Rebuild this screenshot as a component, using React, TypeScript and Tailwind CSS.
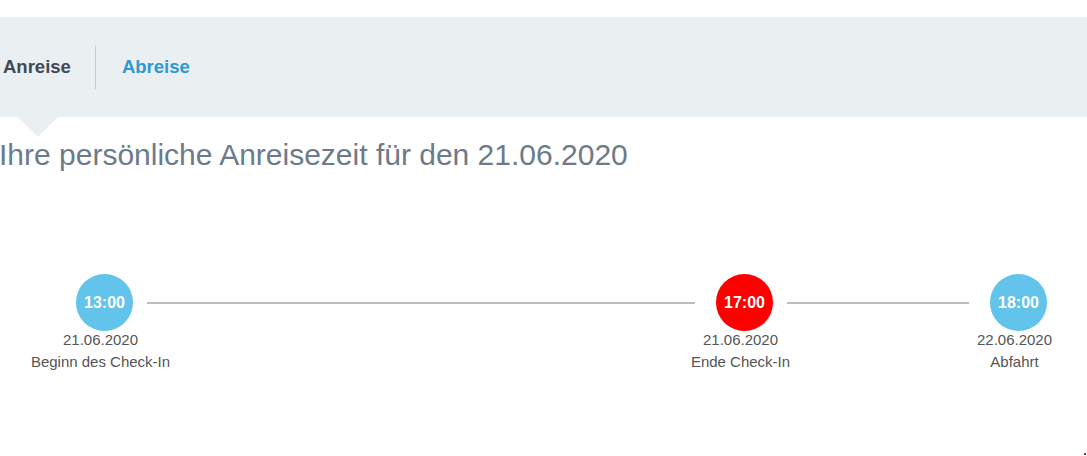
const NODES = [
  { time: "13:00", date: "21.06.2020", label: "Beginn des Check-In", color: "bg-[#62c3eb]" },
  { time: "17:00", date: "21.06.2020", label: "Ende Check-In", color: "bg-[#ff0000]" },
  { time: "18:00", date: "22.06.2020", label: "Abfahrt", color: "bg-[#62c3eb]" },
];

const TimeNode = ({ time, date, label, color }: (typeof NODES)[number]) => {
  return (
    <div className="flex flex-col items-center w-[57px] shrink-0">
      <div
        className={`w-[57px] h-[57px] rounded-full ${color} flex items-center justify-center text-white font-bold text-[16px]`}
      >
        {time}
      </div>
      <p className="whitespace-nowrap pr-[8px] text-[15px] leading-[22px] text-[#555] -mt-[2px]">{date}</p>
      <p className="whitespace-nowrap pr-[8px] text-[15px] leading-[22px] text-[#555]">{label}</p>
    </div>
  );
};

export default function App() {
  return (
    <div className="w-[1087px] h-[456px] bg-white overflow-hidden relative font-['Liberation_Sans',Arial,sans-serif]">
      <div className="h-[17px]" />
      <nav className="relative h-[100px] bg-[#eaeff2] flex items-center">
        <span className="pl-[3px] pr-[24px] text-[18.5px] font-bold text-[#404a55]">Anreise</span>
        <span className="w-px h-[43px] bg-[#c6ccd1]" />
        <span className="pl-[26px] text-[18.5px] font-bold text-[#2d9ad4]">Abreise</span>
        <span className="absolute left-[18px] top-full w-0 h-0 border-l-[20px] border-r-[20px] border-t-[20px] border-l-transparent border-r-transparent border-t-[#eaeff2]" />
      </nav>

      <h1 className="mt-[21px] text-[30px] leading-[34px] text-[#6c7b8a] -ml-[1px]">
        Ihre persönliche Anreisezeit für den 21.06.2020
      </h1>

      <section className="mt-[102px] pl-[76px] flex items-start">
        <TimeNode {...NODES[0]} />
        <div className="mt-[27.5px] ml-[14px] mr-[21px] w-[548px] h-[2px] bg-[#bdbdbd]" />
        <TimeNode {...NODES[1]} />
        <div className="mt-[27.5px] ml-[14px] mr-[21px] w-[182px] h-[2px] bg-[#bdbdbd]" />
        <TimeNode {...NODES[2]} />
      </section>

      <span className="absolute right-[1px] bottom-[1px] w-[2px] h-[2px] bg-[#ff0000]" />
    </div>
  );
}
